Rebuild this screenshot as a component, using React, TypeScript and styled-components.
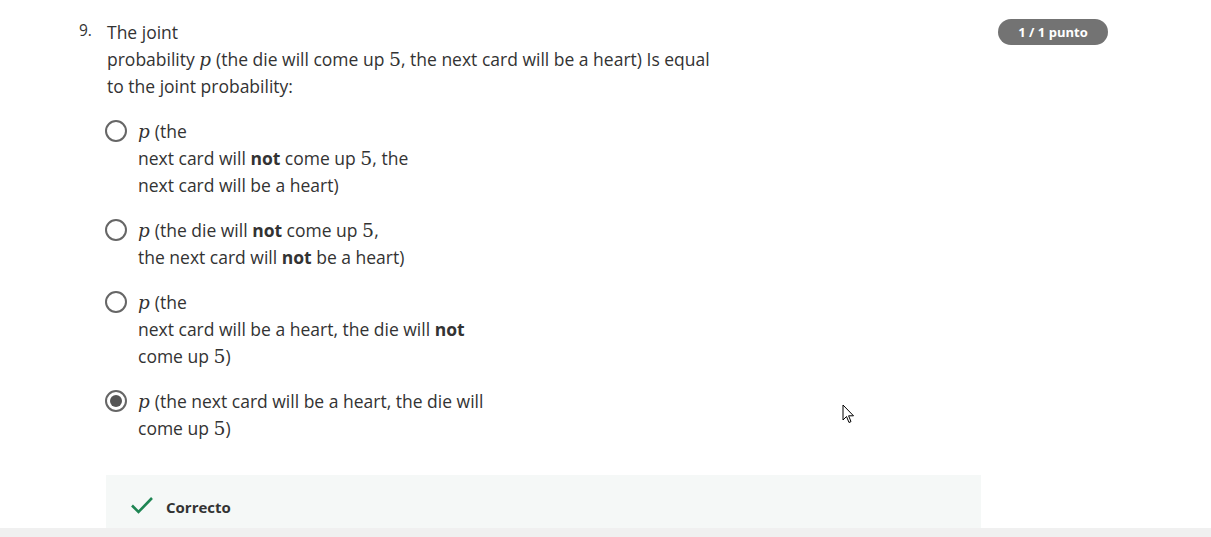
import React from "react";
import styled, { createGlobalStyle } from "styled-components";

const Global = createGlobalStyle`
  html, body { margin: 0; padding: 0; background: #fff; }
  body { font-family: "Open Sans", "Liberation Sans", sans-serif; color: #333; }
`;

const Page = styled.div`
  width: 1211px;
  height: 537px;
  display: flex;
  flex-direction: column;
  overflow: hidden;
  position: relative;
`;

const Main = styled.div`
  flex: 1;
  overflow: hidden;
  display: flex;
  padding: 19px 103px 0 79px;
  box-sizing: border-box;
`;

const QNumber = styled.div`
  width: 26px;
  flex: none;
  font-size: 15.5px;
  line-height: 27px;
  margin-top: -2px;
  color: #333;
`;

const Content = styled.div`
  width: 876px;
  flex: none;
  display: flex;
  flex-direction: column;
`;

const Aside = styled.div`
  flex: 1;
  display: flex;
  justify-content: flex-end;
  align-items: flex-start;
`;

const Badge = styled.div`
  width: 110px;
  height: 26px;
  border-radius: 13px;
  background: #737373;
  color: #fff;
  font-size: 13px;
  font-weight: 700;
  display: flex;
  align-items: center;
  justify-content: center;
`;

const Text = styled.div<{ $indent?: number }>`
  font-size: 17.5px;
  line-height: 27px;
  padding-left: ${(p) => p.$indent ?? 2}px;
`;

const Line = styled.div`
  white-space: nowrap;
  height: 27px;
`;

const MathText = styled.span<{ $italic?: boolean }>`
  font-family: "DejaVu Serif", "Liberation Serif", serif;
  font-style: ${(p) => (p.$italic ? "italic" : "normal")};
  font-size: ${(p) => (p.$italic ? "1.05em" : "1.08em")};
  line-height: 0;
  padding-right: ${(p) => (p.$italic ? "5px" : "0")};
`;

const Options = styled.div`
  display: flex;
  flex-direction: column;
  gap: 18px;
  margin-top: 18px;
`;

const Option = styled.label`
  display: flex;
  align-items: flex-start;
  gap: 11px;
`;

const Radio = styled.span<{ $checked?: boolean }>`
  flex: none;
  width: 22px;
  height: 22px;
  margin-top: 2px;
  box-sizing: border-box;
  border-radius: 50%;
  border: 2px solid #666;
  display: flex;
  align-items: center;
  justify-content: center;
  &::after {
    content: "";
    width: 12px;
    height: 12px;
    border-radius: 50%;
    background: ${(p) => (p.$checked ? "#555" : "transparent")};
  }
`;

const Feedback = styled.div`
  margin-top: 33px;
  margin-left: 1px;
  background: #f5f8f7;
  height: 70px;
  display: flex;
  align-items: flex-start;
  gap: 12px;
  padding: 20px 0 0 24px;
  box-sizing: border-box;
`;

const FeedbackText = styled.span`
  font-size: 15px;
  font-weight: 700;
  color: #333;
  line-height: 24px;
`;

const BottomBar = styled.div`
  height: 9px;
  flex: none;
  background: #f0f0f0;
`;

const Cursor = styled.svg`
  position: absolute;
  left: 842px;
  top: 404px;
`;

const P = () => <MathText $italic>p</MathText>;
const Five = () => <MathText>5</MathText>;

export default function App() {
  return (
    <>
      <Global />
      <Page>
        <Main>
          <QNumber>9.</QNumber>
          <Content>
            <Text>
              <Line>The joint</Line>
              <Line>
                probability <P />(the die will come up <Five />, the next card will be a heart) Is equal
              </Line>
              <Line>to the joint probability:</Line>
            </Text>
            <Options>
              <Option>
                <Radio />
                <Text $indent={0}>
                  <Line>
                    <P />(the
                  </Line>
                  <Line>
                    next card will <b>not</b> come up <Five />, the
                  </Line>
                  <Line>next card will be a heart)</Line>
                </Text>
              </Option>
              <Option>
                <Radio />
                <Text $indent={0}>
                  <Line>
                    <P />(the die will <b>not</b> come up <Five />,
                  </Line>
                  <Line>
                    the next card will <b>not</b> be a heart)
                  </Line>
                </Text>
              </Option>
              <Option>
                <Radio />
                <Text $indent={0}>
                  <Line>
                    <P />(the
                  </Line>
                  <Line>
                    next card will be a heart, the die will <b>not</b>
                  </Line>
                  <Line>
                    come up <Five />)
                  </Line>
                </Text>
              </Option>
              <Option>
                <Radio $checked />
                <Text $indent={0}>
                  <Line>
                    <P />(the next card will be a heart, the die will
                  </Line>
                  <Line>
                    come up <Five />)
                  </Line>
                </Text>
              </Option>
            </Options>
            <Feedback>
              <svg width="24" height="20" viewBox="0 0 24 20">
                <path d="M2 10.5 L8.5 17 L22 3" fill="none" stroke="#1e8553" strokeWidth="2.6" />
              </svg>
              <FeedbackText>Correcto</FeedbackText>
            </Feedback>
          </Content>
          <Aside>
            <Badge>1 / 1 punto</Badge>
          </Aside>
        </Main>
        <BottomBar />
        <Cursor width="14" height="22" viewBox="0 0 14 22">
          <path d="M1 1 L1 16 L4.5 12.5 L7 18.5 L9 17.6 L6.6 11.8 L11.5 11.8 Z" fill="#fff" stroke="#000" strokeWidth="1" />
        </Cursor>
      </Page>
    </>
  );
}
